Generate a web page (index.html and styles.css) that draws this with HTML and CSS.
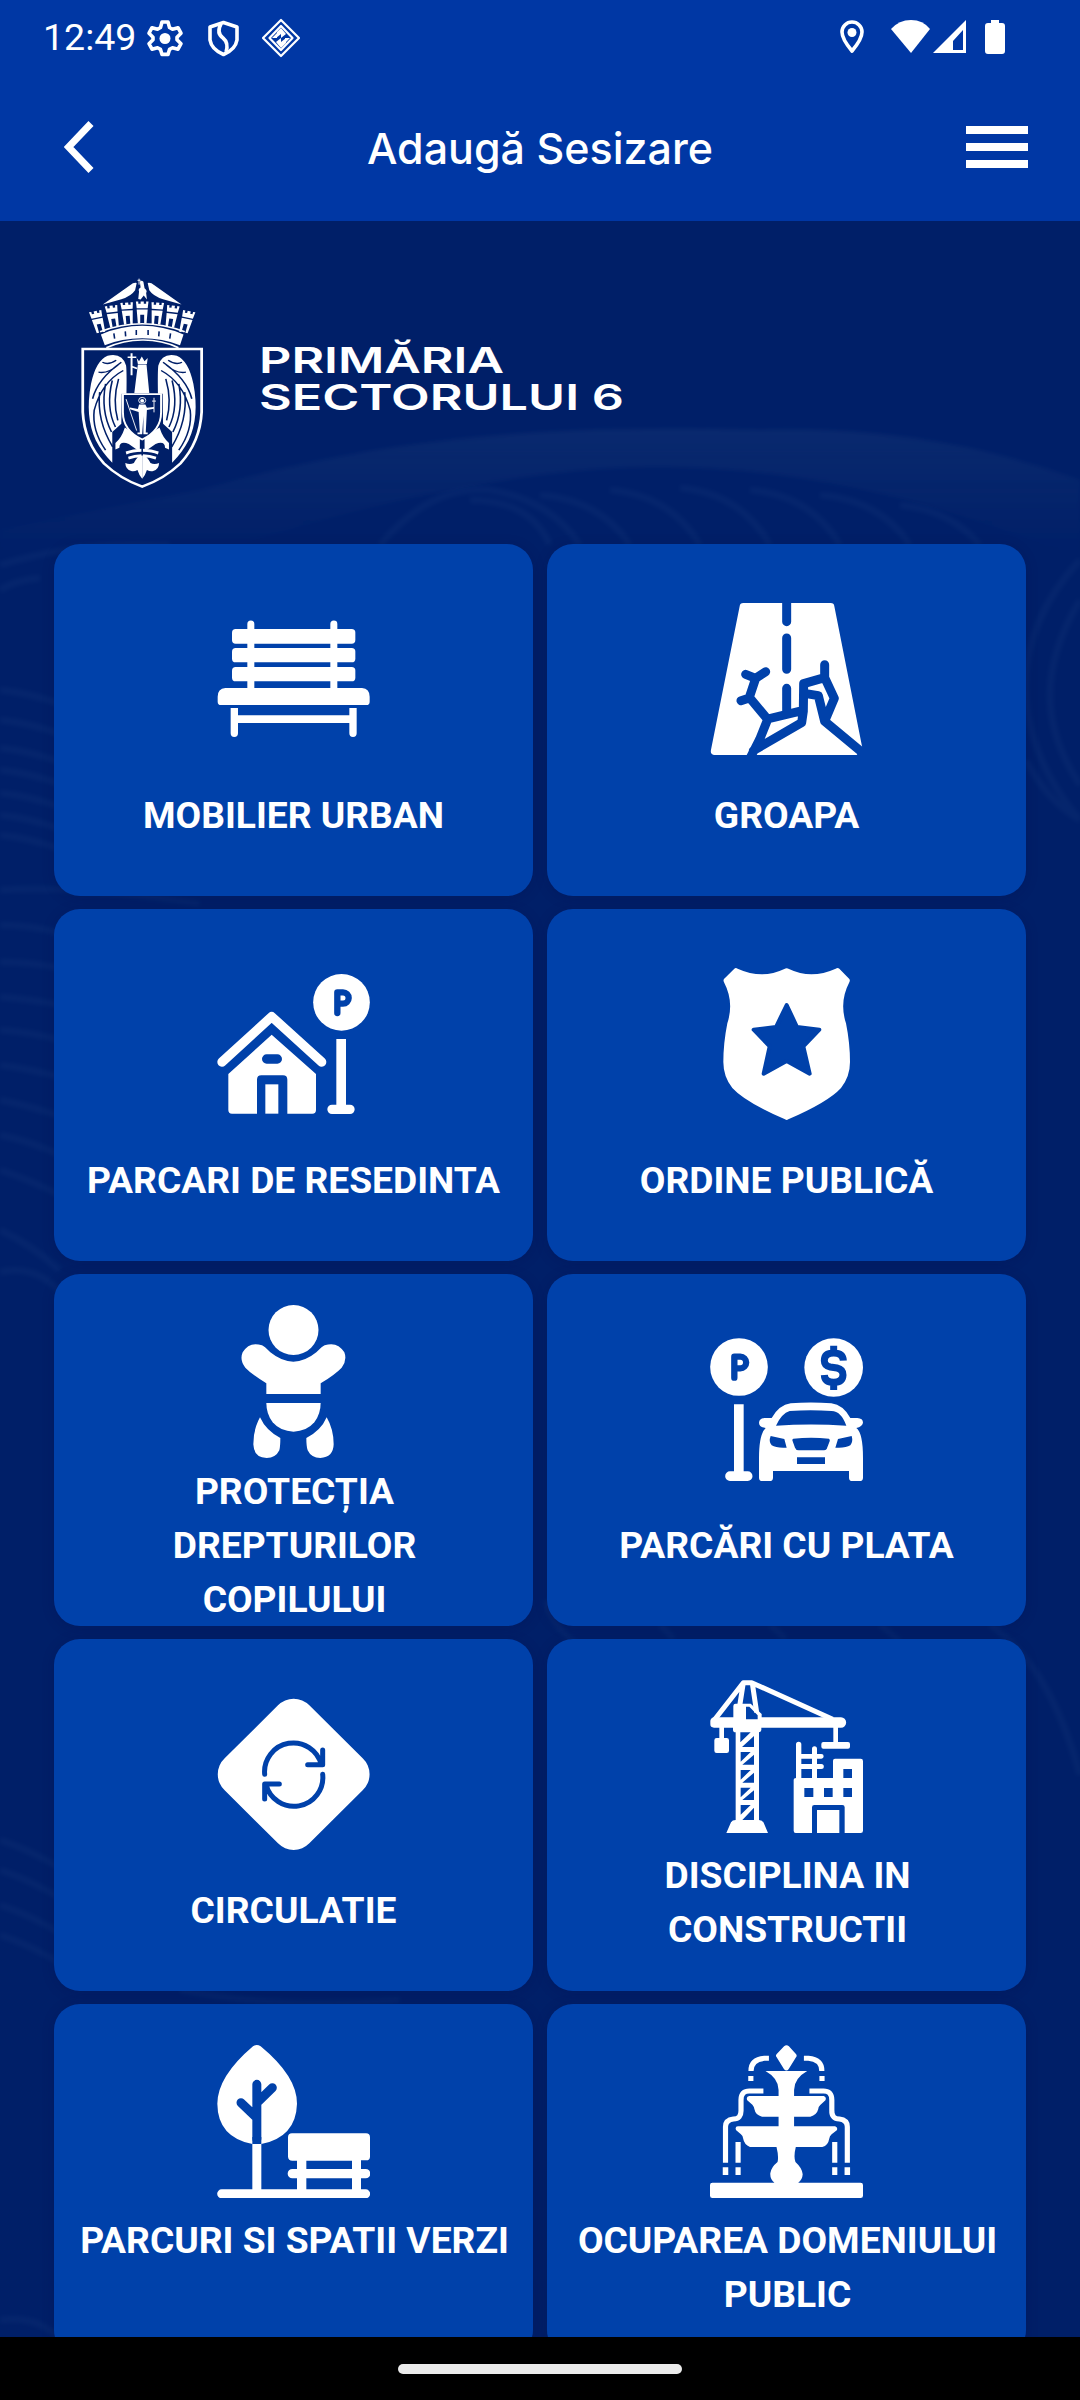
FILE: index.html
```html
<!DOCTYPE html>
<html lang="ro">
<head>
  <meta charset="UTF-8">
  <meta name="viewport" content="width=device-width, initial-scale=1.0">
  <title>Adaugă Sesizare</title>
  <link rel="stylesheet" href="styles.css">
</head>
<body>
  <header class="top">
    <div class="status-bar">
      <span class="clock">12:49</span>
      <svg class="status-left" viewBox="146 17 156 42">
        <path class="line" d="M162 22h6l1.500 5.500 3 1.700 5.500-1.500 3 5.500-4 4v2.500l4 4-3 5.500-5.500-1.500-3 1.700-1.500 5h-6l-1.500-5-3-1.700-5.500 1.500-3-5.500 4-4v-2.500l-4-4 3-5.500 5.500 1.500 3-1.700z"/>
        <circle class="fill" cx="165" cy="38.500" r="5.500"/>
        <path class="line" d="M223.500 22.500l13.500 4.500v13q-1.500 9.500-13.500 14.500Q211.500 49.500 210 40V27z"/>
        <path class="line" d="M221 24q-5 9 2 14 6 5 3 14"/>
        <path class="line thin" d="M281 20l18 18-18 18-18-18zM281 26l11.500 12L281 50l-11.500-12z"/>
        <path class="fill" d="M281 28l5 6-5 4v-4l-5 4 1-6zM281 48l-5-6 5-4v4l5-4v5zM272 38l5-5v5zM290 38l-5 5v-5z"/>
      </svg>
      <svg class="status-right" viewBox="838 17 170 40">
        <path class="line" d="M852 51q-10-12-10-19a10 10 0 0 1 20 0q0 7-10 19z"/>
        <circle class="fill" cx="852" cy="32.500" r="4.500"/>
        <path class="fill" d="M911 53L891 29q8-9 20-9t19 9z"/>
        <path class="fill" fill-rule="evenodd" d="M966 20v33h-33zM963 30l-10 11v9h10z"/>
        <path class="fill" d="M991 20h8v3h3q3 0 3 3v25q0 3-3 3h-14q-3 0-3-3V26q0-3 3-3h3z"/>
      </svg>
    </div>
    <div class="title-bar">
      <svg class="back" viewBox="0 0 30 52"><path d="M27 2.500L4.500 26 27 49.500"/></svg>
      <h1 class="title">Adaugă Sesizare</h1>
      <div class="menu"><span></span><span></span><span></span></div>
    </div>
  </header>

  <main class="content">
    <!-- faint contour lines behind the cards -->
    <svg class="waves" viewBox="0 221 1080 2116">
      <defs>
        <linearGradient id="mist" x1="0" y1="0" x2="0" y2="1">
          <stop offset="0" stop-color="#5f86a5" stop-opacity=".1"/>
          <stop offset=".6" stop-color="#5f86a5" stop-opacity="0"/>
        </linearGradient>
        <filter id="soft"><feGaussianBlur stdDeviation="2"/></filter>
      </defs>
      <path fill="url(#mist)" filter="url(#soft)" d="M0 530Q120 505 200 490 320 455 450 440T760 430Q930 425 1080 480V560Q800 440 540 475T0 640z"/>
      <g class="contour" filter="url(#soft)">
        <path d="M380 545q50-60 110-55 60 10 90 55M470 500q60 0 80 45M540 495q60 5 90 50M610 490q60 5 90 55M680 488q60 5 90 57M750 490q60 5 90 55M820 495q60 5 90 50M900 505q50 5 80 40"/>
        <path d="M1080 560q-56 60-54 130t54 130M1080 600q-30 50-30 95t30 90M1026 760q20 40 54 60"/>
        <path d="M0 565q80-25 170-20M0 590q15-10 40-12M0 690q30 3 60 14M0 720q30 3 60 14M0 748q30 3 60 14M0 770q30 3 60 14M0 793q30 3 60 14M0 815q30 3 60 14M0 835q30 3 60 14M0 890q80-5 200 14M0 925q30 0 60 8M0 962q30 0 60 6M0 997q30 2 60 8M0 1030q30 2 60 10M0 1065q30 4 60 12M0 1100q30 6 60 16M0 1135q30 6 60 20M0 1170q30 10 60 25M0 1230q30 14 60 40"/>
        <path d="M0 1272q35-8 60 20M0 1840q30 10 60 28M0 1870q30 10 60 28M0 1905q30 10 60 28M0 1935q30 10 60 28M0 2320q40-5 60 20M180 1990q100 20 220 10"/>
        <path d="M545 1600q8 30 40 50M660 1625l14 14M770 1625l16 14M880 1625l20 16M990 1625q60 40 90 150"/>
      </g>
    </svg>

    <div class="logo">
      <svg class="crest" viewBox="100 75 315 642" preserveAspectRatio="none">
        <defs>
          <g id="tower">
            <path d="M-16 152h6v7h6v-7h8v7h6v-7h6l-2 20h-28z"/>
            <path d="M-14 176h28l-3 42h-6v-26h-10v26h-6z"/>
          </g>
          <g id="half">
            <path d="M244 96Q236 94 228 102L158 161 205 145Q230 136 240 118z"/>
            <path d="M218 430Q219 360 217 345 208 305 170 315 140 330 128 400 112 500 140 570 155 605 182 638L182 545 205 520 206 430z"/>
            <path d="M214 532Q205 565 190 578v20l10-5q0-22 24-12l28 24V560z"/>
            <path d="M216 604q18-8 40-8v9q-22 0-38 8zM222 620q16-8 34-8v9q-16 0-32 7z"/>
            <path d="M258 616v70q-8-10-12-26-8 5-16 3-14-4-15-24 12 6 22 0 2-8 14-23z"/>
            <path class="feather" d="M205 335Q145 385 132 445M210 360Q155 395 136 480Q130 540 165 600M150 425Q142 510 183 590M165 400Q152 480 180 545M182 390Q165 470 190 530M198 385Q182 450 196 510M157 335q15 10 35-6M147 365q25 5 50-22"/>
          </g>
        </defs>
        <g class="fill">
          <use href="#tower" transform="translate(147 28) rotate(-13 0 190)"/>
          <use href="#tower" transform="translate(184 12) rotate(-8 0 190)"/>
          <use href="#tower" transform="translate(221 3) rotate(-4 0 190)"/>
          <use href="#tower" transform="translate(258 0)"/>
          <use href="#tower" transform="translate(295 3) rotate(4 0 190)"/>
          <use href="#tower" transform="translate(332 12) rotate(8 0 190)"/>
          <use href="#tower" transform="translate(369 28) rotate(13 0 190)"/>
          <path d="M153 251Q205 225 258 225T363 251l-9 33Q310 263 258 263T163 284z"/>
          <use href="#half"/>
          <use href="#half" transform="matrix(-1 0 0 1 516 0)"/>
          <path d="M252 92q4-6 9 0l3 20q8 8 4 14l2 20-8-12-8 12-6-2 2-22q-3-8 4-12z"/>
          <path d="M247 342h22l7 86h-38zM244 322l6 10 7-14 7 14 8-10-2 18h-23z"/>
        </g>
        <path class="ink" d="M151 243Q205 219 258 219T366 243M167 291Q210 269 258 268T350 291M231 308v66M221 320h22M231 348l14 6"/>
        <path class="cut" d="M186 248l2 16M215 242l1 15M243 238v15M273 238v15M301 242l-1 15M330 248l-2 16"/>
        <path class="shield-line" d="M107 295H409V485Q405 575 355 640 315 685 258 710 201 685 161 640 111 575 107 485z"/>
        <path class="inner-shield" d="M209 431h97v55q0 55-48 82-49-27-49-82z"/>
        <path class="fill" d="M250 462h16l4 10 18-2v5l-18 4-3 68h5v5h-11v-55l-3 55h-12v-5h6l-3-62-22-8v-6l20 5z"/>
        <circle class="thin-ink" cx="258" cy="450" r="9"/>
        <circle class="fill" cx="258" cy="451" r="5"/>
        <path class="thin-ink" d="M217 446l27 95M288 442v44M283 452h10M250 83v18M246 88h8"/>
      </svg>
      <svg class="logo-text" viewBox="0 0 364 80">
        <text x="-2" y="34" textLength="245" lengthAdjust="spacingAndGlyphs">PRIMĂRIA</text>
        <text x="-2" y="70.500" textLength="365" lengthAdjust="spacingAndGlyphs">SECTORULUI 6</text>
      </svg>
    </div>

    <div class="grid">
      <div class="card">
        <svg class="icon" viewBox="531 219 459 459">
          <path d="M622 480V282a10.500 10.500 0 0 1 21 0V480zM871 480V282a10.500 10.500 0 0 1 21 0V480z"/>
          <rect x="576" y="297" width="370" height="44" rx="11"/>
          <rect x="576" y="354" width="370" height="43" rx="11"/>
          <rect x="576" y="411" width="370" height="43" rx="11"/>
          <path d="M556 474H966Q989 476 989 500V515q0 10-10 10H543q-10 0-10-10V500Q533 476 556 474zM572 534h22v22h334v-22h22v76a11 11 0 0 1-22 0v-31H594v31a11 11 0 0 1-22 0z"/>
        </svg>
        <p class="label">MOBILIER URBAN</p>
      </div>

      <div class="card">
        <svg class="icon" viewBox="510 219 459 459">
          <path d="M610 219H872q10 0 11 10L967 654 950 675H522q-12-2-9-16L599 229q1-10 11-10z"/>
          <g class="cut-line">
            <path d="M740 205V275M740 324V418M740 475V545M617 433l30 12 30-20M647 445l-19 57 55 66-24 60-28 55M603 512l25-8M683 567l107-26 1-80 63-18V404M854 443l29 62-29 69 122 101M640 662l145-84 5-35M798 491l37 6 19 77"/>
          </g>
        </svg>
        <p class="label">GROAPA</p>
      </div>

      <div class="card">
        <svg class="icon" viewBox="531 204 459 459">
          <path class="stroke" d="M546 486L695 350 845 486"/>
          <path fill-rule="evenodd" d="M695 404L828 522V630q0 11-11 11H742V539q0-13-13-13H664q-13 0-13 13V641H576q-11 0-11-11V522zM680 463a14 14 0 0 0 0 28h32a14 14 0 0 0 0-28z"/>
          <path d="M676 553h39v88h-39z"/>
          <circle cx="904.500" cy="307" r="85"/>
          <path d="M889 417h29V614h12a14 14 0 0 1 0 28H876a14 14 0 0 1 0-28h13z"/>
          <path class="letter" d="M892 339V277h17a17 17 0 0 1 0 34H894"/>
        </svg>
        <p class="label">PARCARI DE RESEDINTA</p>
      </div>

      <div class="card">
        <svg class="icon" viewBox="510 204 459 459">
          <path d="M583 206Q587 202 593 206 666 239 733 207 740 202 747 207 814 239 887 206 893 202 898 206L928 237Q931 241 928 247 897 306 918 370 930 430 930 486 930 530 903 564 865 606 745 658 740 662 735 658 615 606 577 564 550 530 550 486 550 430 562 370 583 306 552 247 549 241 552 237z"/>
          <path class="cut-star" d="M740 315l31 66 67 8-48 50 19 82-69-38-69 38 18-82-48-50 67-8z"/>
        </svg>
        <p class="label">ORDINE PUBLICĂ</p>
      </div>

      <div class="card three">
        <svg class="icon" viewBox="531 120 459 459">
          <circle cx="760.500" cy="195" r="75"/>
          <path d="M679 387V355Q635 328 616 308 598 285 608 262 628 228 666 241 672 243 691 262 760 318 829 262 848 243 854 241 892 228 913 262 922 285 905 308 886 328 842 355V387z"/>
          <path d="M679 414H842Q842 447 823 472 800 499 760.500 500 721 499 698 472 679 447 679 414z"/>
          <path d="M660 457Q678 497 721 519 721 545 718 556 707 579 680 579 641 577 640 538 640 493 660 457zM860 457Q843 497 799 519 799 545 803 556 814 579 841 579 880 577 881 538 881 493 860 457z"/>
        </svg>
        <p class="label">PROTECȚIA DREPTURILOR COPILULUI</p>
      </div>

      <div class="card">
        <svg class="icon" viewBox="510 204 459 459">
          <circle cx="597" cy="306" r="86.500"/>
          <circle cx="881" cy="307.500" r="88"/>
          <path d="M582 418h29V619h12a14.500 14.500 0 0 1 0 29H570a14.500 14.500 0 0 1 0-29h12z"/>
          <path class="letter" d="M583 338V275h18a17.500 17.500 0 0 1 0 35H585"/>
          <path class="dollar" d="M910 287Q909 264 881 264 853 264 853 287 853 302 871 306L891 309Q909 313 909 330 908 352 881 352 854 352 853 330M881 242V262M881 352V375"/>
          <path fill-rule="evenodd" d="M695 459Q717 420 752 415 812 410 874 415 910 420 931 459H952q17 1 17 14-2 11-20 16 20 15 20 90V638q0 10-10 10H937q-10 0-10-10V618H699V638q0 10-10 10H667q-10 0-10-10V580q0-72 20-91-20-3-20-16 1-13 17-14zM708 482Q812 475 919 482 903 438 875 438 812 433 749 438 725 445 708 482z"/>
          <path class="cut" d="M692 513l41 9 7 26q-31 2-45-7-10-11-3-28zM935 513l-41 9-8 26q31 2 45-7 9-11 4-28zM760 521q53-5 107 0 4 3 2 8l-9 23q-3 4-8 4h-76q-8 0-11-8l-8-22q0-4 3-5zM771 577h84v20h-84z"/>
        </svg>
        <p class="label">PARCĂRI CU PLATA</p>
      </div>

      <div class="card">
        <svg class="icon" viewBox="531 204 459 459">
          <path d="M714 226A66 66 0 0 1 808 226L968 385A66 66 0 0 1 968 481L808 640A66 66 0 0 1 714 640L554 481A66 66 0 0 1 554 385z"/>
          <path class="arrows" d="M674 433A86.500 86.500 0 0 1 844 404M848 360V404H803M848 433A86.500 86.500 0 0 1 678 463M674 507V462H718"/>
        </svg>
        <p class="label">CIRCULATIE</p>
      </div>

      <div class="card two">
        <svg class="icon" viewBox="510 150 459 459">
          <path class="crane-line" d="M523 270L610 158H635L878 268M610 158L599 228M637 160L650 247"/>
          <path fill-rule="evenodd" d="M523 262H580V228q0-7 7-7H632L665 252V262H903a15.500 15.500 0 0 1 0 31H664V300q0 6-7 7V570q10 0 14 8L684 609H559L573 577q4-7 14-7V307q-8 0-8-8V293H552v31h8q7 0 7 7v31q0 7-7 7H530q-7 0-7-7V331q0-7 7-7h8V293H522q-11 0-11-10V272q2-9 12-10zM618 230V268H653V256L628 230z"/>
          <path class="cut" d="M601 307h31l-31 30zM642 318v33h-36zM602 366h30l-30 29zM642 374v30h-35zM602 420h30l-30 29zM642 428v30h-35zM602 473h30l-30 29zM642 481v29h-35zM602 525h30l-30 29zM642 533v37h-35z"/>
          <path d="M880 290h14v46h30q6 0 6 6v8q0 6-6 6H850q-6 0-6-6v-8q0-6 6-6h30z"/>
          <path fill-rule="evenodd" d="M768 444V343a7.500 7.500 0 0 1 16 0v29h32v-16a7.500 7.500 0 0 1 15 0v16h13a6 6 0 0 1 0 14h-13v16h13a7 7 0 0 1 0 15h-13v27H879V392q0-6 6-6H962q7 0 7 7V602q0 7-7 7H914V532q0-7-7-7H823q-7 0-7 7V609H767q-6 0-6-7V449q0-5 7-5zM784 386v16h32v-16zM784 417v27h32v-27zM910 417v27h26v-27zM793 474v27h27v-27zM852 474v27h26v-27zM910 474v27h26v-27z"/>
          <path d="M831 540h67v69h-67z"/>
        </svg>
        <p class="label">DISCIPLINA IN CONSTRUCTII</p>
      </div>

      <div class="card two">
        <svg class="icon" viewBox="531 164 459 459">
          <path d="M639 168q11-8 23 0Q771 258 771 340 768 440 664 461V597H771V511H757q-12 0-13-12V441q0-12 12-12H978q12 0 12 12V499q0 11-12 11H963V536H977a14 14 0 0 1 0 28H963V597H977a13.500 13.500 0 0 1 0 27H545a13.500 13.500 0 0 1 0-27H637V461Q533 440 532 340 533 258 639 168zM799 511V536H936V511zM799 564V597H936V564zM771 536H757a14 14 0 0 0 0 28H771z" fill-rule="evenodd"/>
          <path class="cut-line" d="M650.500 446V282M697 292L651 337M603 337L650 382"/>
          <path class="cut" d="M637 440h27v21h-27z"/>
        </svg>
        <p class="label">PARCURI SI SPATII VERZI</p>
      </div>

      <div class="card two">
        <svg class="icon" viewBox="494 165 444 459" preserveAspectRatio="none">
          <path d="M709 169q7-6 14 0l21 24q3 4 0 8l-22 37q-6 7-13 0l-22-37q-3-4 0-8zM655 243H776Q738 265 738 300V318H824q9 3 5 13l-15 14q-6 5-6 13-4 17-23 22H738V409H857q9 3 5 12l-15 12q-6 5-7 13-3 20-20 25H743Q736 500 742 516 762 535 763 553 762 570 750 578H931q7 0 7 7V617q0 7-7 7H501q-7 0-7-7V585q0-7 7-7H681Q668 567 669 550 671 532 690 516 694 500 687 471H610Q593 464 590 445 590 437 583 432L570 421Q565 410 575 409H693V380H645Q626 376 623 358 622 350 617 344L602 331Q598 319 608 318H693V300Q693 265 655 243z"/>
          <g id="spray">
            <path class="water" d="M665 205H652Q613 208 613 243M649 303H610Q584 302 584 330V360Q585 387 562 387 539 390 539 410V518"/>
            <path d="M605 258h15v15h-15zM531 532h16v23h-16zM568 532h15v23h-15zM568 456h15v62h-15z"/>
          </g>
          <use href="#spray" transform="matrix(-1 0 0 1 1431.500 0)"/>
        </svg>
        <p class="label">OCUPAREA DOMENIULUI PUBLIC</p>
      </div>
    </div>
  </main>

  <footer class="nav-bar"><span class="pill"></span></footer>
</body>
</html>
```
FILE: styles.css
```css
* {
  box-sizing: border-box;
}

body {
  margin: 0;
  height: 2400px;
  display: flex;
  flex-direction: column;
  overflow: hidden;
  background-color: #001f68;
  font-family: Roboto, "Liberation Sans", sans-serif;
  color: white;
}

svg {
  display: block;
  fill: white;
}

.top {
  height: 221px;
  flex: none;
  background-color: #0037a4;
}

.status-bar {
  height: 74px;
  display: flex;
  align-items: center;
  padding: 0 72px 0 43px;
}

.clock {
  width: 103px;
  font-size: 37.5px;
  line-height: 74px;
}

.status-left {
  width: 156px;
  height: 42px;
  margin-top: 2px;
}

.status-right {
  width: 170px;
  height: 40px;
  margin-left: auto;
}

.line {
  fill: none;
  stroke: white;
  stroke-width: 3.6;
  stroke-linejoin: round;
}

.thin {
  stroke-width: 2.2;
}

.fill {
  fill: white;
}

.title-bar {
  height: 146px;
  display: flex;
  align-items: center;
  justify-content: space-between;
  padding: 0 52px 0 64px;
}

.back {
  width: 30px;
  height: 52px;
  margin-right: 20px;
  fill: none;
  stroke: white;
  stroke-width: 7;
}

.title {
  margin: 1px 0 0;
  font-family: Inter, sans-serif;
  font-size: 43px;
  font-weight: 500;
}

.menu {
  display: flex;
  flex-direction: column;
  gap: 9px;
}

.menu span {
  width: 62px;
  height: 8px;
  background-color: white;
}

.content {
  position: relative;
  flex: 1;
  overflow: hidden;
  padding: 55px 54px 0;
}

/* decoration under the logo and the cards */
.waves {
  position: absolute;
  left: 0;
  top: 0;
  width: 1080px;
  height: 2116px;
}

.contour {
  fill: none;
  stroke: #4f78a8;
  stroke-width: 7;
  opacity: 0.07;
}

.logo {
  position: relative;
  display: flex;
  height: 268px;
  padding-left: 26px;
}

.crest {
  width: 124px;
  height: 213px;
  margin-right: 57px;
}

.feather {
  fill: none;
  stroke: #001f68;
  stroke-width: 4;
}

.ink,
.thin-ink,
.shield-line {
  fill: none;
  stroke: white;
  stroke-width: 5;
}

.thin-ink {
  stroke-width: 2.5;
}

.shield-line {
  stroke-width: 7;
}

.inner-shield {
  fill: #001f68;
  stroke: white;
  stroke-width: 5;
}

.crest .cut {
  stroke: #001f68;
  stroke-width: 4;
}

.logo-text {
  width: 364px;
  height: 80px;
  margin-top: 63px;
  overflow: visible;
  font-family: Inter, sans-serif;
  font-size: 36px;
  font-weight: 600;
}

.grid {
  position: relative;
  display: grid;
  grid-template-columns: 479px 479px;
  grid-auto-rows: 351.500px;
  gap: 13.500px 14px;
}

.card {
  display: flex;
  flex-direction: column;
  align-items: center;
  gap: 32px;
  padding: 59px 16px 0;
  border-radius: 26px;
  background-color: #0041aa;
  box-shadow: 0 2px 12px rgba(0, 14, 80, 0.25);
}

.card.two {
  padding-top: 41px;
  gap: 15px;
}

.card.three {
  padding: 31px 90px 0;
  gap: 6px;
}

.icon {
  flex: none;
  width: 153px;
  height: 153px;
}

.label {
  margin: 0;
  font-size: 37.2px;
  font-weight: bold;
  line-height: 54px;
  text-align: center;
}

/* these labels sit a touch to the right of the icon */
.two .label,
.three .label {
  padding-left: 2px;
}

.icon .cut {
  fill: #0041aa;
}

.cut-line {
  fill: none;
  stroke: #0041aa;
  stroke-width: 27;
  stroke-linecap: round;
  stroke-linejoin: round;
}

.cut-star {
  fill: #0041aa;
  stroke: #0041aa;
  stroke-width: 12;
  stroke-linejoin: round;
}

.stroke {
  fill: none;
  stroke: white;
  stroke-width: 28;
  stroke-linecap: round;
  stroke-linejoin: round;
}

.letter,
.dollar,
.arrows {
  fill: none;
  stroke: #0041aa;
  stroke-width: 19;
  stroke-linecap: round;
  stroke-linejoin: round;
}

.dollar {
  stroke-width: 21;
  stroke-linecap: butt;
}

.arrows {
  stroke-width: 15;
}

.crane-line {
  fill: none;
  stroke: white;
  stroke-width: 15;
  stroke-linejoin: round;
}

.water {
  fill: none;
  stroke: white;
  stroke-width: 15;
}

.nav-bar {
  flex: none;
  height: 63px;
  display: flex;
  justify-content: center;
  padding-top: 27px;
  background-color: black;
}

.pill {
  width: 284px;
  height: 10px;
  border-radius: 5px;
  background-color: #ebebeb;
}
```
